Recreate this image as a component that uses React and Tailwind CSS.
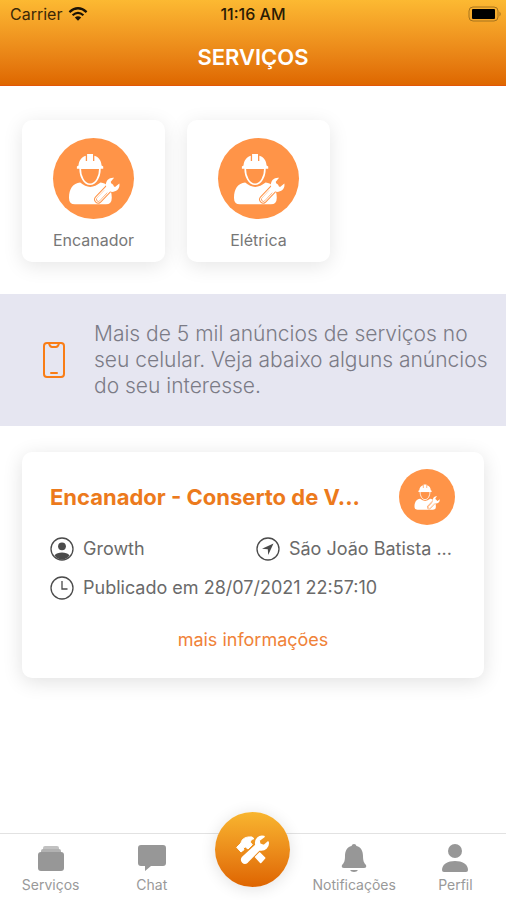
import clsx from "clsx";

const services = [
  { id: 1, name: "Encanador" },
  { id: 2, name: "Elétrica" },
];

function WifiIcon() {
  return (
    <svg viewBox="0 0 60 44" className="h-[14px] w-5" aria-hidden="true">
      <g fill="none" stroke="#1a1206" strokeWidth="7">
        <path d="M3 16Q30-8 57 16" />
        <path d="M13 26Q30 11 47 26" />
      </g>
      <path d="M20 33Q30 25 40 33L30 43Z" fill="#1a1206" />
    </svg>
  );
}

function BatteryIcon() {
  return (
    <svg viewBox="0 0 34 16" className="h-4 w-[34px]" aria-hidden="true">
      <rect x="1" y="1" width="29" height="14" rx="4" fill="none" stroke="#a8741c" strokeWidth="1" />
      <rect x="4" y="3" width="23" height="10" rx="1" fill="#000" />
      <path d="M31.500 5.500Q34 8 31.500 10.500Z" fill="#a8741c" />
    </svg>
  );
}

// Worker with a hard hat and a wrench
function WorkerIcon({ className }) {
  return (
    <svg viewBox="48 34 156 158" className={className} aria-hidden="true">
      <path
        d="M50 170C50 144 62 126 84 124Q114 150 146 124C166 126 180 142 180 170Q180 190 162 190H68Q50 190 50 170Z"
        fill="#fff"
      />
      <path d="M84 80C84 106 96 129 114 129S144 106 144 80Z" fill="#ff9448" stroke="#fff" strokeWidth="5" />
      <path d="M74 82V75L79 72C80 56 89 46 101 42V58H105V37H123V58H127V42C140 46 148 56 149 72L154 75V82Z" fill="#fff" />
      <g strokeLinecap="round" fill="none">
        <path d="M139 175L178 134" stroke="#ff9448" strokeWidth="25" />
        <path d="M139 175L176 136" stroke="#fff" strokeWidth="19" />
        <path d="M139 175L160 153" stroke="#ff9448" strokeWidth="13" />
        <path d="M140 174L170 142" stroke="#fff" strokeWidth="11" />
      </g>
      <path
        d="M187 109C168 107 158 123 164 139L177 152C193 154 206 143 203 127L190 137L179 132L177 121Z"
        fill="#fff"
      />
    </svg>
  );
}

function WorkerBadge({ small }) {
  return (
    <span
      className={clsx(
        "flex shrink-0 items-center justify-center rounded-full bg-[#ff9448]",
        small ? "size-14" : "size-[81px]",
      )}
    >
      <WorkerIcon className={small ? "size-[26px]" : "size-[52px]"} />
    </span>
  );
}

function PhoneIcon() {
  return (
    <svg viewBox="0 0 22 36" className="h-9 w-[22px]" fill="none" stroke="#f97d16" strokeWidth="2" aria-hidden="true">
      <rect x="1" y="1" width="20" height="34" rx="3" />
      <path d="M6 1.500Q7 5 9 5H13Q15 5 16 1.500" />
      <path d="M8 31H14" strokeLinecap="round" />
    </svg>
  );
}

function PersonCircleIcon() {
  return (
    <svg viewBox="0 0 24 24" className="size-6 shrink-0" aria-hidden="true">
      <circle cx="12" cy="12" r="11" fill="none" stroke="#4b4b4b" strokeWidth="1.300" />
      <circle cx="12" cy="9.300" r="3.900" fill="#4b4b4b" />
      <path d="M4.500 18.500C6 16.500 9 15.600 12 15.600S18 16.500 19.500 18.500Q16.500 22.600 12 22.600T4.500 18.500Z" fill="#4b4b4b" />
    </svg>
  );
}

function NavigateIcon() {
  return (
    <svg viewBox="0 0 24 24" className="size-6 shrink-0" aria-hidden="true">
      <circle cx="12" cy="12" r="11" fill="none" stroke="#4b4b4b" strokeWidth="1.300" />
      <path d="M17.500 6.500L6 11.800L11.800 12.300L12.200 18Z" fill="#4b4b4b" />
    </svg>
  );
}

function ClockIcon() {
  return (
    <svg viewBox="0 0 24 24" className="size-6 shrink-0" fill="none" stroke="#4b4b4b" strokeWidth="1.300" aria-hidden="true">
      <circle cx="12" cy="12" r="11" />
      <path d="M12 5V13H17.500" />
    </svg>
  );
}

function ToolsIcon() {
  return (
    <svg viewBox="0 0 102 90" className="h-[30px] w-[34px]" fill="#fff" stroke="#fff" strokeLinejoin="round" aria-hidden="true">
      {/* hammer */}
      <path d="M2 37L15 24C17 11 30 4 48 6L54 11C46 13 42 17 44 23L49 29L36 42L28 36L22 39L24 44L15 51Z" strokeWidth="3" />
      <path d="M59 66L71 54L86 69L74 82Z" strokeWidth="5" />
      {/* wrench */}
      <path d="M84 5C70 1 56 12 60 30L20 67C12 78 24 89 34 81L70 44C86 48 99 36 96 21L84 32L71 27L69 16Z" strokeWidth="5" />
    </svg>
  );
}

function AlbumsIcon() {
  return (
    <svg viewBox="0 0 28 26" className="h-[26px] w-7" fill="#979797" aria-hidden="true">
      <path d="M6 3Q6 1 8 1H20Q22 1 22 3V4H6Z" opacity=".6" />
      <path d="M4 6Q4 4 6 4H22Q24 4 24 6V7H4Z" opacity=".75" />
      <rect x="1" y="7" width="26" height="19" rx="3" />
    </svg>
  );
}

function ChatIcon() {
  return (
    <svg viewBox="0 0 28 26" className="h-[26px] w-7" fill="#979797" aria-hidden="true">
      <path d="M3 0H25Q28 0 28 3V18Q28 21 25 21H13L7 26V21H3Q0 21 0 18V3Q0 0 3 0Z" />
    </svg>
  );
}

function BellIcon() {
  return (
    <svg viewBox="0 0 28 28" className="size-7" fill="#979797" aria-hidden="true">
      <path d="M14 0Q16 0 16.500 2C21 3 23 7 23 12C23 17 24 19 26 21Q27 24 24 24H4Q1 24 2 21C4 19 5 17 5 12C5 7 7 3 11.500 2Q12 0 14 0Z" />
      <path d="M10 26H18Q17 28 14 28T10 26Z" />
    </svg>
  );
}

function PersonIcon() {
  return (
    <svg viewBox="0 0 28 28" className="size-7" fill="#979797" aria-hidden="true">
      <circle cx="14" cy="7" r="7" />
      <path d="M1 26C1 20 7 17 14 17S27 20 27 26Q27 28 25 28H3Q1 28 1 26Z" />
    </svg>
  );
}

function Header() {
  return (
    <header className="h-[86px] border-b border-[#e25608] bg-linear-to-b from-[#fcb932] to-[#de6700]">
      <div className="grid h-7 grid-cols-3 items-center px-1 text-base">
        <div className="flex items-center gap-[6px] pl-[6px] text-[#3b2807]">
          <span>Carrier</span>
          <WifiIcon />
        </div>
        <span className="text-center font-medium text-[#2a1b04]">11:16 AM</span>
        <div className="flex justify-end">
          <BatteryIcon />
        </div>
      </div>
      <h1 className="pt-[13px] text-center text-[22px] leading-8 font-semibold text-white">SERVIÇOS</h1>
    </header>
  );
}

function ServiceCard({ name }) {
  return (
    <button
      type="button"
      className="flex h-[142px] w-[143px] flex-col items-center rounded-[10px] bg-white pt-[18px] shadow-[0_4px_20px_rgba(0,0,0,0.1)]"
    >
      <WorkerBadge />
      <span className="pt-[11px] text-base leading-5 text-[#777]">{name}</span>
    </button>
  );
}

function AdCard() {
  return (
    <article className="mx-[22px] mt-[26px] rounded-[10px] bg-white px-7 pt-[17px] pb-6 shadow-[0_4px_20px_rgba(0,0,0,0.12)]">
      <div className="flex items-center justify-between pr-px">
        <h2 className="text-[22px] leading-7 font-bold whitespace-nowrap text-[#ec7a1c]">
          Encanador - Conserto de V...
        </h2>
        <WorkerBadge small />
      </div>
      <div className="mt-3 flex items-center justify-between pr-1 text-lg leading-6 text-[#6a6a6a]">
        <span className="flex items-center gap-[9px]">
          <PersonCircleIcon />
          Growth
        </span>
        <span className="flex items-center gap-[9px]">
          <NavigateIcon />
          São João Batista ...
        </span>
      </div>
      <div className="mt-[15px] flex items-center gap-[9px] text-lg leading-6 text-[#6a6a6a]">
        <ClockIcon />
        Publicado em 28/07/2021 22:57:10
      </div>
      <div className="mt-[26px] text-center">
        <a href="#detalhes" className="block text-lg leading-7 text-[#f08238]">
          mais informações
        </a>
      </div>
    </article>
  );
}

function Tab({ href, label, children }) {
  return (
    <a href={href} className="flex flex-col items-center pt-[10px] text-sm leading-4 text-[#999]">
      <span className="flex h-7 items-center">{children}</span>
      <span className="pt-[5px]">{label}</span>
    </a>
  );
}

function TabBar() {
  return (
    <nav className="grid h-[67px] grid-cols-5 border-t border-[#e2e2e2] bg-white">
      <Tab href="#servicos" label="Serviços">
        <AlbumsIcon />
      </Tab>
      <Tab href="#chat" label="Chat">
        <ChatIcon />
      </Tab>
      <div className="flex justify-center">
        <button
          type="button"
          aria-label="Ferramentas"
          className="-mt-[22px] flex size-[75px] items-center justify-center rounded-full bg-linear-to-b from-[#f8b52f] to-[#de6400] shadow-[0_2px_16px_rgba(0,0,0,0.12)]"
        >
          <ToolsIcon />
        </button>
      </div>
      <Tab href="#notificacoes" label="Notificações">
        <BellIcon />
      </Tab>
      <Tab href="#perfil" label="Perfil">
        <PersonIcon />
      </Tab>
    </nav>
  );
}

function App() {
  return (
    <div className="flex min-h-screen flex-col bg-white font-['Inter','Liberation_Sans',sans-serif]">
      <Header />
      <main className="flex-1">
        <div className="flex gap-[22px] px-[22px] pt-[34px] pb-8">
          {services.map((service) => (
            <ServiceCard key={service.id} name={service.name} />
          ))}
        </div>
        <section className="flex items-center gap-[29px] bg-[#e6e6f1] py-[27px] pr-2 pl-[43px]">
          <PhoneIcon />
          <p className="flex-1 text-[21px] leading-[26px] font-light text-[#7b7b86]">
            Mais de 5 mil anúncios de serviços no seu celular. Veja abaixo alguns anúncios do seu interesse.
          </p>
        </section>
        <AdCard />
      </main>
      <TabBar />
    </div>
  );
}

export default App;
